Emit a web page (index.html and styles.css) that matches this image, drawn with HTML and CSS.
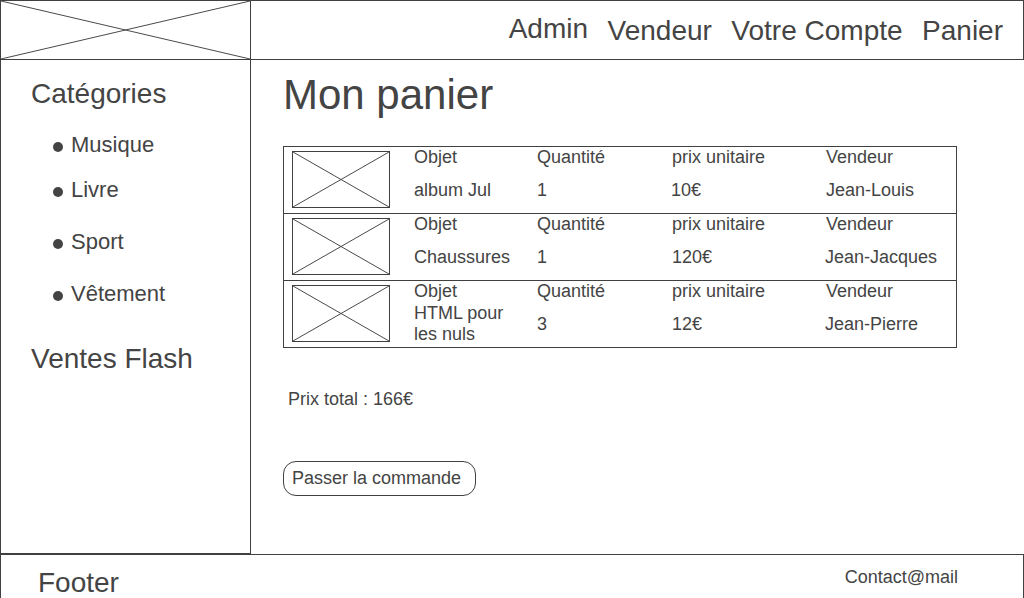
FILE: index.html
```html
<!DOCTYPE html>
<html lang="fr">
<head>
<meta charset="utf-8">
<title>Mon panier</title>
<link rel="stylesheet" href="styles.css">
</head>
<body>
<div class="page">
  <header class="header">
    <div class="logo">
      <svg class="xbox" viewBox="0 0 100 100" preserveAspectRatio="none"><line x1="0" y1="0" x2="100" y2="100"/><line x1="0" y1="100" x2="100" y2="0"/></svg>
    </div>
    <nav class="nav">
      <a class="nav-item nav-item--high">Admin</a>
      <a class="nav-item">Vendeur</a>
      <a class="nav-item">Votre Compte</a>
      <a class="nav-item">Panier</a>
    </nav>
  </header>

  <div class="middle">
    <aside class="sidebar">
      <h2 class="side-title">Catégories</h2>
      <ul class="cat-list">
        <li class="cat">Musique</li>
        <li class="cat cat--near">Livre</li>
        <li class="cat">Sport</li>
        <li class="cat">Vêtement</li>
      </ul>
      <h2 class="side-title side-title--flash">Ventes Flash</h2>
    </aside>

    <main class="main">
      <h1 class="title">Mon panier</h1>

      <div class="cart">
        <div class="cart-row">
          <div class="thumb"><svg class="xbox" viewBox="0 0 100 100" preserveAspectRatio="none"><line x1="0" y1="0" x2="100" y2="100"/><line x1="0" y1="100" x2="100" y2="0"/></svg></div>
          <div class="cell"><span class="label">Objet</span><span class="value">album Jul</span></div>
          <div class="cell"><span class="label">Quantité</span><span class="value">1</span></div>
          <div class="cell"><span class="label">prix unitaire</span><span class="value value--price">10€</span></div>
          <div class="cell"><span class="label">Vendeur</span><span class="value">Jean-Louis</span></div>
        </div>
        <div class="cart-row">
          <div class="thumb"><svg class="xbox" viewBox="0 0 100 100" preserveAspectRatio="none"><line x1="0" y1="0" x2="100" y2="100"/><line x1="0" y1="100" x2="100" y2="0"/></svg></div>
          <div class="cell"><span class="label">Objet</span><span class="value">Chaussures</span></div>
          <div class="cell"><span class="label">Quantité</span><span class="value">1</span></div>
          <div class="cell"><span class="label">prix unitaire</span><span class="value">120€</span></div>
          <div class="cell"><span class="label">Vendeur</span><span class="value value--seller">Jean-Jacques</span></div>
        </div>
        <div class="cart-row">
          <div class="thumb"><svg class="xbox" viewBox="0 0 100 100" preserveAspectRatio="none"><line x1="0" y1="0" x2="100" y2="100"/><line x1="0" y1="100" x2="100" y2="0"/></svg></div>
          <div class="cell"><span class="label">Objet</span><span class="value">HTML pour<br>les nuls</span></div>
          <div class="cell"><span class="label">Quantité</span><span class="value">3</span></div>
          <div class="cell"><span class="label">prix unitaire</span><span class="value">12€</span></div>
          <div class="cell"><span class="label">Vendeur</span><span class="value value--seller">Jean-Pierre</span></div>
        </div>
      </div>

      <p class="total">Prix total : 166€</p>

      <button class="order-btn" type="button">Passer la commande</button>
    </main>
  </div>

  <footer class="footer">
    <span class="footer-title">Footer</span>
    <span class="footer-contact">Contact@mail</span>
  </footer>
</div>
</body>
</html>
```

FILE: styles.css
```css
* { box-sizing: border-box; }

html, body {
  margin: 0;
  padding: 0;
  overflow: hidden;
  background: #fff;
}

body {
  font-family: "Liberation Sans", Arial, sans-serif;
  color: #444;
}

.page {
  width: 1024px;
  height: 598px;
  display: flex;
  flex-direction: column;
}

/* ---------- header ---------- */
.header {
  height: 60px;
  border: 1px solid #404040;
  display: flex;
  flex-shrink: 0;
}

.logo {
  width: 250px;
  height: 58px;
  border-right: 1px solid #404040;
}

.xbox {
  display: block;
  width: 100%;
  height: 100%;
}

.xbox line {
  stroke: #4a4a4a;
  stroke-width: 1;
  vector-effect: non-scaling-stroke;
}

.nav {
  flex: 1;
  display: flex;
  justify-content: flex-end;
  align-items: flex-start;
  gap: 19.5px;
  padding-right: 20px;
}

.nav-item {
  font-size: 28px;
  line-height: 32px;
  margin-top: 14px;
  color: #444;
}

.nav-item--high {
  margin-top: 12px;
}

/* ---------- middle ---------- */
.middle {
  height: 494px;
  display: flex;
  flex-shrink: 0;
}

.sidebar {
  width: 251px;
  border-left: 1px solid #404040;
  border-right: 1px solid #404040;
  border-bottom: 1px solid #404040;
  padding: 18px 0 0 30px;
}

.side-title {
  margin: 0;
  font-size: 28px;
  font-weight: normal;
  line-height: 32px;
}

.side-title--flash {
  margin-top: 36px;
}

.cat-list {
  list-style: none;
  margin: 22px 0 0 0;
  padding: 0 0 0 22px;
}

.cat {
  display: flex;
  align-items: center;
  font-size: 22px;
  line-height: 26px;
  margin-top: 26px;
}

.cat:first-child {
  margin-top: 0;
}

.cat--near {
  margin-top: 19px;
}

.cat::before {
  content: "";
  width: 10px;
  height: 10px;
  border-radius: 50%;
  background: #444;
  margin: 3px 8px 0 0;
  flex-shrink: 0;
}

.main {
  flex: 1;
  padding: 11px 0 0 32px;
}

.title {
  margin: 0;
  font-size: 42px;
  font-weight: normal;
  line-height: 48px;
}

/* ---------- cart ---------- */
.cart {
  margin-top: 27px;
  width: 674px;
  border: 1px solid #404040;
}

.cart-row {
  height: 67px;
  display: grid;
  grid-template-columns: 130px 123px 135px 154px 1fr;
  border-top: 1px solid #404040;
}

.cart-row:first-child {
  height: 66px;
  border-top: none;
}

.thumb {
  width: 98px;
  height: 57px;
  margin: 4px 0 0 8px;
  border: 1px solid #404040;
}

.cell {
  display: flex;
  flex-direction: column;
  font-size: 18px;
  line-height: 21px;
}

.label {
  height: 21px;
  white-space: nowrap;
}

.value {
  height: 44px;
  display: flex;
  align-items: center;
  white-space: nowrap;
}

.value--price {
  margin-left: -1px;
}

.value--seller {
  margin-left: -1px;
}

/* ---------- total & button ---------- */
.total {
  margin: 41px 0 0 5px;
  font-size: 18px;
  line-height: 21px;
}

.order-btn {
  display: block;
  width: 193px;
  margin-top: 51px;
  font-family: "Liberation Sans", Arial, sans-serif;
  font-size: 18px;
  line-height: 21px;
  color: #444;
  text-align: left;
  background: #fff;
  border: 1px solid #404040;
  border-radius: 13px;
  padding: 6px 4px 6px 8px;
}

/* ---------- footer ---------- */
.footer {
  height: 44px;
  border: 1px solid #404040;
  border-bottom: none;
  display: flex;
  justify-content: space-between;
  align-items: flex-start;
  padding: 12px 65px 0 37px;
}

.footer-title {
  font-size: 28px;
  line-height: 32px;
}

.footer-contact {
  font-size: 18px;
  line-height: 21px;
}
```
